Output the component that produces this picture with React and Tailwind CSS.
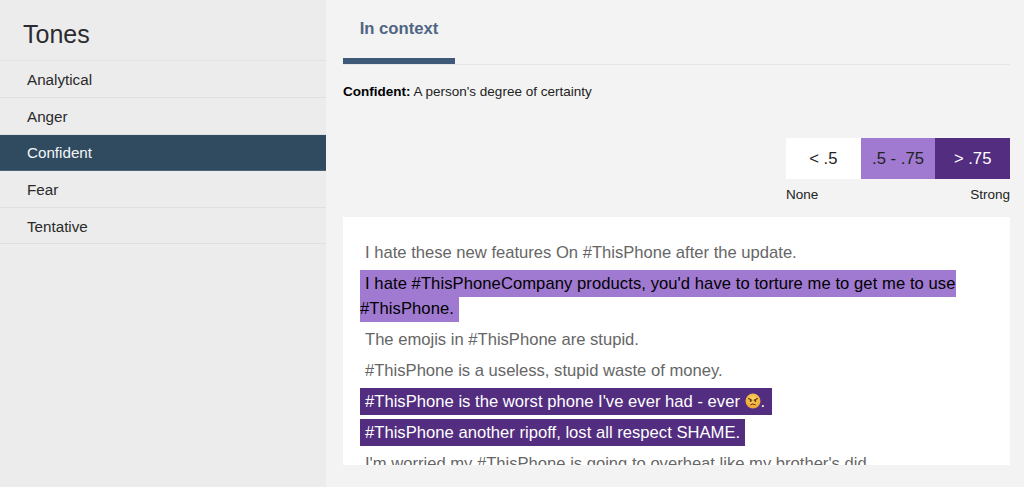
function AngryFace() {
  return (
    <svg viewBox="0 0 16 16" className="inline-block w-[16px] h-[16px] align-[-2px]">
      <defs>
        <radialGradient id="face" cx="50%" cy="35%" r="70%">
          <stop offset="0%" stopColor="#fbd75a" />
          <stop offset="100%" stopColor="#ee9a35" />
        </radialGradient>
      </defs>
      <circle cx="8" cy="8" r="7.5" fill="url(#face)" />
      <path d="M3.5 5.6 L6.8 7.2 M12.5 5.6 L9.2 7.2" stroke="#5a3312" strokeWidth="1.1" strokeLinecap="round" />
      <circle cx="5.6" cy="8" r="0.9" fill="#5a3312" />
      <circle cx="10.4" cy="8" r="0.9" fill="#5a3312" />
      <path d="M5.8 11.6 Q8 10 10.2 11.6" stroke="#5a3312" strokeWidth="1" fill="none" strokeLinecap="round" />
    </svg>
  );
}

const tones = ["Analytical", "Anger", "Confident", "Fear", "Tentative"];

function Sentence({ tone, children }) {
  const tones = {
    none: "text-[#666666]",
    mid: "bg-[#a07ad0] text-black py-1 tracking-[0.07px]",
    high: "bg-[#522d80] text-white py-1 tracking-[0.02px]",
  };
  return (
    <p className="my-[6px] leading-[25px]">
      <span className={`px-[5px] ${tones[tone]}`}>{children}</span>
    </p>
  );
}

export default function App() {
  return (
    <div className="flex h-[487px] overflow-hidden bg-[#f3f3f3] text-[#222222] font-['Liberation_Sans',Arial,sans-serif]">
      <aside className="w-[326px] shrink-0 bg-[#ececec]">
        <h2 className="pl-[23px] pt-[19px] h-[61.4px] text-[25px] leading-[30px] font-normal text-[#2b2b30] border-b border-[#e2e2e2]">
          Tones
        </h2>
        <ul>
          {tones.map((t) => (
            <li
              key={t}
              className={`h-[36.6px] pl-[27px] pt-[3px] flex items-center text-[15.2px] border-b ${
                t === "Confident"
                  ? "bg-[#304b5f] text-[#f4f6f8] border-[#4a6478]"
                  : "text-[#2a2a2a] border-[#e0e0e0]"
              }`}
            >
              {t}
            </li>
          ))}
        </ul>
      </aside>

      <main className="flex-1 pl-[17px] pr-[14px] min-w-0">
        <div className="h-[65px] border-b border-[#e6e6e6] flex">
          <div className="w-[112px] h-[64px] border-b-[6px] border-[#3f5a78] pt-[19px] text-center text-[16.67px] leading-[20px] font-bold text-[#4f6582]">
            In context
          </div>
        </div>

        <p className="mt-[19px] text-[13.5px] leading-[16px] text-[#222222]">
          <strong className="font-bold text-black">Confident:</strong> A person's degree of certainty
        </p>

        <div className="mt-[38px] flex flex-col items-end">
          <div className="w-[224px]">
            <div className="grid grid-cols-3 h-[41px] text-[16.67px] items-stretch">
              <div className="bg-white flex items-center justify-center text-[#222222]">&lt; .5</div>
              <div className="bg-[#a07ad0] flex items-center justify-center text-[#222222]">.5 - .75</div>
              <div className="bg-[#522d80] flex items-center justify-center text-white">&gt; .75</div>
            </div>
            <div className="mt-[8px] flex justify-between text-[13.5px] leading-[16px] text-[#222222]">
              <span>None</span>
              <span>Strong</span>
            </div>
          </div>
        </div>

        <div className="mt-[14px] h-[248px] overflow-hidden bg-white pl-[17px] pr-[17px] pt-[17px] text-[16.6px]">
          <Sentence tone="none">I hate these new features On #ThisPhone after the update.</Sentence>
          <Sentence tone="mid">I hate #ThisPhoneCompany products, you'd have to torture me to get me to use #ThisPhone.</Sentence>
          <Sentence tone="none">The emojis in #ThisPhone are stupid.</Sentence>
          <Sentence tone="none">#ThisPhone is a useless, stupid waste of money.</Sentence>
          <Sentence tone="high">#ThisPhone is the worst phone I've ever had - ever <AngryFace /><span className="pr-[2px]">.</span></Sentence>
          <Sentence tone="high">#ThisPhone another ripoff, lost all respect SHAME.</Sentence>
          <Sentence tone="none">I'm worried my #ThisPhone is going to overheat like my brother's did.</Sentence>
        </div>
      </main>
    </div>
  );
}
